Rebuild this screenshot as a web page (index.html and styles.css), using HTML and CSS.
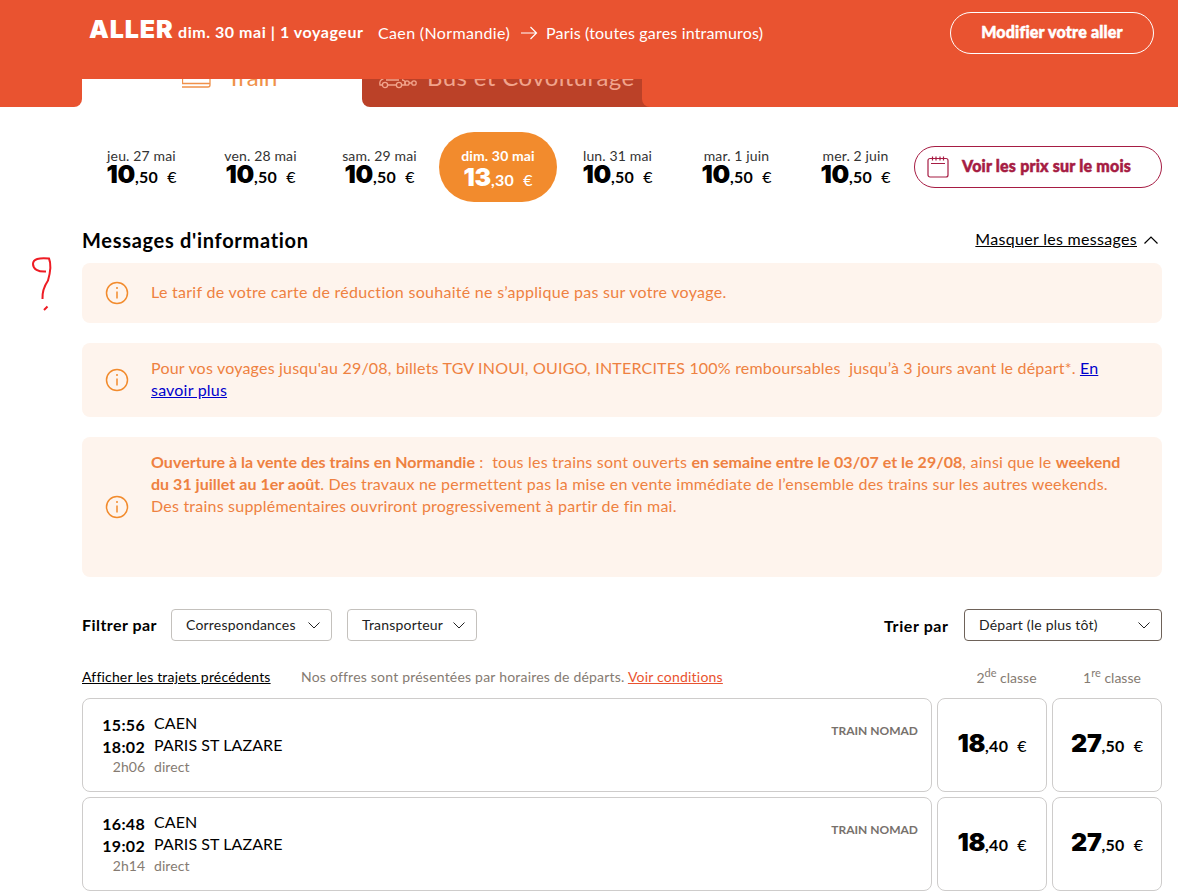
FILE: index.html
```html
<!DOCTYPE html>
<html lang="fr">
<head>
    <meta charset="UTF-8">
    <meta name="viewport" content="width=device-width, initial-scale=1.0">
    <title>Caen - Paris</title>
    <link rel="stylesheet" href="styles.css">
</head>
<body>
    <!-- Header -->
    <header class="header">
        <h1>ALLER</h1>
        <span class="header-date">dim. 30 mai | 1 voyageur</span>
        <span class="header-from">Caen (Normandie)</span>
        <svg class="arrow" width="18" height="14" viewBox="0 0 18 14"><path d="M1 7h15.500M10.500 1l6 6-6 6"/></svg>
        <span class="header-to">Paris (toutes gares intramuros)</span>
        <button class="button button-edit"><span>Modifier votre aller</span></button>
    </header>

    <!-- Tabs -->
    <nav class="tabs">
        <div class="tabs-left"></div>
        <div class="tab tab-train">
            <svg width="30" height="24" viewBox="0 0 30 24"><path d="M0.500 1v18M0 18.500h28M28 1v19q0 2-2 2H0"/></svg>
            <span>Train</span>
        </div>
        <div class="tab tab-bus">
            <svg width="40" height="24" viewBox="0 0 40 24"><path d="M4 20H2q-1-5 3-6l4-5h12l4 5M10 20h8M8 15h13M24 20h3q1-5-3-5M31 18h3"/><circle cx="7" cy="20" r="2.600"/><circle cx="21" cy="20" r="2.600"/><circle cx="29" cy="18" r="2.200"/><circle cx="36" cy="18" r="2.200"/></svg>
            <span>Bus et Covoiturage</span>
        </div>
        <div class="tabs-right"></div>
    </nav>

    <main class="container">
        <!-- Dates -->
        <div class="dates">
            <div class="date"><span class="day">jeu. 27 mai</span><span class="price"><b>10</b><i>,50</i><em>€</em></span></div>
            <div class="date"><span class="day">ven. 28 mai</span><span class="price"><b>10</b><i>,50</i><em>€</em></span></div>
            <div class="date"><span class="day">sam. 29 mai</span><span class="price"><b>10</b><i>,50</i><em>€</em></span></div>
            <div class="date active"><span class="day">dim. 30 mai</span><span class="price"><b>13</b><i>,30</i><em>€</em></span></div>
            <div class="date"><span class="day">lun. 31 mai</span><span class="price"><b>10</b><i>,50</i><em>€</em></span></div>
            <div class="date"><span class="day">mar. 1 juin</span><span class="price"><b>10</b><i>,50</i><em>€</em></span></div>
            <div class="date"><span class="day">mer. 2 juin</span><span class="price"><b>10</b><i>,50</i><em>€</em></span></div>
            <button class="button button-month">
                <svg width="22" height="22" viewBox="0 0 22 22"><rect x="1" y="2.500" width="20" height="18.500" rx="2"/><path d="M4 7.500h14M5.500 0.500v4M9 0.500v4M13 0.500v4M16.500 0.500v4"/></svg>
                <span>Voir les prix sur le mois</span>
            </button>
        </div>

        <!-- Messages -->
        <section class="messages">
            <div class="messages-header">
                <h2>Messages d'information</h2>
                <a class="toggle" href="#">Masquer les messages</a>
                <svg width="14" height="8" viewBox="0 0 14 8"><path d="M0.500 7.500L7 1l6.500 6.500"/></svg>
            </div>
            <div class="message message-short">
                <svg class="info" width="24" height="24" viewBox="0 0 24 24"><circle cx="12" cy="12" r="10.500"/><path d="M12 10.500v7M12 6v2"/></svg>
                <p>Le tarif de votre carte de réduction souhaité ne s’applique pas sur votre voyage.</p>
            </div>
            <div class="message message-medium">
                <svg class="info" width="24" height="24" viewBox="0 0 24 24"><circle cx="12" cy="12" r="10.500"/><path d="M12 10.500v7M12 6v2"/></svg>
                <p>Pour vos voyages jusqu'au 29/08, billets TGV INOUI, OUIGO, INTERCITES 100% remboursables&nbsp; jusqu’à 3 jours avant le départ*. <a href="#">En<br>savoir plus</a></p>
            </div>
            <div class="message message-long">
                <svg class="info" width="24" height="24" viewBox="0 0 24 24"><circle cx="12" cy="12" r="10.500"/><path d="M12 10.500v7M12 6v2"/></svg>
                <p>
                    <strong>Ouverture à la vente des trains en Normandie</strong> :&nbsp; tous les trains sont ouverts <strong>en semaine entre le 03/07 et le 29/08</strong>, ainsi que le <strong>weekend<br>
                    du 31 juillet au 1er août</strong>. Des travaux ne permettent pas la mise en vente immédiate de l’ensemble des trains sur les autres weekends.<br>
                    Des trains supplémentaires ouvriront progressivement à partir de fin mai.
                </p>
            </div>
            <svg class="question" width="24" height="58" viewBox="0 0 24 58"><path d="M15 15.500C7 16 2 13 2 8 2 3 8 1.500 18 2.500c3 7 1 15-1 22-4 6-6 11-5.500 18.500M13 54l3.500-3.500"/></svg>
        </section>

        <!-- Filters -->
        <div class="filters">
            <strong class="filter-label">Filtrer par</strong>
            <button class="select select-conn"><span>Correspondances</span><svg width="12" height="7" viewBox="0 0 12 7"><path d="M0.500 0.500L6 6l5.500-5.500"/></svg></button>
            <button class="select select-carrier"><span>Transporteur</span><svg width="12" height="7" viewBox="0 0 12 7"><path d="M0.500 0.500L6 6l5.500-5.500"/></svg></button>
            <strong class="sort-label">Trier par</strong>
            <button class="select select-sort"><span>Départ (le plus tôt)</span><svg width="12" height="7" viewBox="0 0 12 7"><path d="M0.500 0.500L6 6l5.500-5.500"/></svg></button>
        </div>

        <!-- Results -->
        <div class="results-header">
            <a class="previous" href="#">Afficher les trajets précédents</a>
            <span class="note">Nos offres sont présentées par horaires de départs. <a href="#">Voir conditions</a></span>
            <span class="class-name second">2<sup>de</sup> classe</span>
            <span class="class-name first">1<sup>re</sup> classe</span>
        </div>
        <div class="results">
            <div class="card trip">
                <div class="times"><b>15:56</b><b>18:02</b><small>2h06</small></div>
                <div class="stations"><span>CAEN</span><span>PARIS ST LAZARE</span><small>direct</small></div>
                <span class="carrier">TRAIN NOMAD</span>
            </div>
            <div class="card fare"><span class="price"><b>18</b><i>,40</i><em>€</em></span></div>
            <div class="card fare"><span class="price"><b>27</b><i>,50</i><em>€</em></span></div>

            <div class="card trip">
                <div class="times"><b>16:48</b><b>19:02</b><small>2h14</small></div>
                <div class="stations"><span>CAEN</span><span>PARIS ST LAZARE</span><small>direct</small></div>
                <span class="carrier">TRAIN NOMAD</span>
            </div>
            <div class="card fare"><span class="price"><b>18</b><i>,40</i><em>€</em></span></div>
            <div class="card fare"><span class="price"><b>27</b><i>,50</i><em>€</em></span></div>
        </div>
    </main>
</body>
</html>
```
FILE: styles.css
```css
* {
    box-sizing: border-box;
}

body {
    font-family: Lato, sans-serif;
    font-size: 16px;
    margin: 0;
    height: 896px;
    overflow: hidden;
    background-color: #fff;
    color: #000;
    white-space: nowrap;
}

h1, h2, p {
    margin: 0;
}

svg {
    fill: none;
    stroke: currentColor;
    flex: none;
}

button {
    font-family: inherit;
    background: none;
    padding: 0;
}

.button {
    height: 42px;
    border-radius: 21px;
    font-size: 16px;
    font-weight: 900;
    letter-spacing: 0.2px;
    -webkit-text-stroke: 0.5px currentColor;
}

.button svg {
    stroke-width: 1.2;
}

/* Header */
.header {
    display: flex;
    height: 79px;
    padding: 12px 24px 0 89px;
    background-color: #e95330;
    color: #fff;
    line-height: 39px;
}

.header h1 {
    width: 89px;
    font-family: Inter, Lato, sans-serif;
    font-size: 25px;
    font-weight: 900;
    line-height: 34px;
    letter-spacing: 0.9px;
}

.header-date {
    width: 200px;
    font-weight: 700;
    letter-spacing: 0.55px;
}

.header-from {
    width: 142px;
    line-height: 41px;
    letter-spacing: 0.35px;
}

.arrow {
    margin: 14px 8px 0 0;
    stroke-width: 1.2;
}

.header-to {
    line-height: 41px;
    letter-spacing: 0.18px;
}

.button-edit {
    width: 204px;
    margin-left: auto;
    border: 1px solid #fff;
    color: #fff;
    line-height: 36px;
}

.button-edit span {
    display: block;
    padding-bottom: 2px;
}

/* Tabs */
.tabs {
    display: flex;
    height: 28px;
    overflow: hidden;
    font-size: 24px;
    line-height: 30px;
    letter-spacing: 0.4px;
}

.tabs-left {
    width: 82px;
    background-color: #e95330;
    border-bottom-right-radius: 8px;
}

.tab {
    display: flex;
    align-items: flex-end;
    width: 280px;
}

.tab svg {
    margin-bottom: 18px;
    stroke-width: 1.3;
}

.tab span {
    margin-bottom: 15px;
}

.tab-train {
    padding-left: 100px;
    color: #f0914a;
}

.tab-train span {
    margin-left: 15px;
    letter-spacing: -0.2px;
}

.tab-bus {
    width: 288px;
    margin-right: -8px;
    padding-left: 16px;
    background-color: #bb4128;
    border-bottom-left-radius: 8px;
    color: #f2a48c;
}

.tab-bus span {
    margin-left: 9px;
}

.tabs-right {
    flex: 1;
    background-color: #e95330;
    border-bottom-left-radius: 8px;
}

.container {
    width: 1080px;
    margin-left: 82px;
}

/* Dates */
.dates {
    display: flex;
    height: 120px;
    padding-top: 25px;
}

.date {
    display: flex;
    flex-direction: column;
    align-items: center;
    width: 119px;
    height: 70px;
    padding-top: 15px;
}

.day {
    font-size: 14px;
    line-height: 18px;
    letter-spacing: 0.15px;
    color: #333;
}

.price {
    display: flex;
    align-items: baseline;
    line-height: 19px;
}

.price b {
    font-family: Inter, Lato, sans-serif;
    font-size: 25px;
    font-weight: 900;
    letter-spacing: -0.3px;
}

.price i {
    font-size: 16px;
    font-style: normal;
    font-weight: 700;
    letter-spacing: 0.3px;
}

.price em {
    margin-left: 9px;
    font-size: 16px;
    font-style: normal;
}

.active {
    width: 118px;
    margin-right: 1px;
    border-radius: 35px;
    background-color: #f28b2d;
    color: #fff;
}

.active .day {
    color: #fff;
    font-weight: 700;
}

.active .price {
    margin-top: 3px;
}

.button-month {
    display: flex;
    width: 248px;
    margin: 14px 0 0 -1px;
    padding: 9px 0 0 12px;
    border: 1px solid #a61c43;
    color: #a61c43;
    line-height: 20px;
}

.button-month span {
    margin-left: 13px;
}

/* Messages */
.messages {
    position: relative;
}

.messages-header {
    display: flex;
    align-items: center;
    height: 36px;
    padding-right: 4px;
    padding-bottom: 10px;
}

.messages-header h2 {
    font-size: 20px;
    letter-spacing: 0.7px;
    margin-right: auto;
}

.messages-header svg {
    margin-left: 7px;
    stroke-width: 1.2;
}

.toggle {
    margin-bottom: 4px;
    letter-spacing: 0.3px;
    color: #000;
}

.message {
    display: flex;
    align-items: center;
    margin-bottom: 20px;
    padding-left: 23px;
    border-radius: 8px;
    background-color: #fef4ed;
    color: #ee8141;
    line-height: 22px;
    letter-spacing: 0.22px;
}

.message p {
    padding-bottom: 2px;
}

.message strong {
    letter-spacing: 0.03px;
}

.message-short {
    height: 60px;
    letter-spacing: 0.28px;
}

.message-medium {
    height: 74px;
    letter-spacing: 0.2px;
}

.message-long {
    height: 140px;
    margin-bottom: 0;
}

.message-long p {
    margin-bottom: 44px;
}

.info {
    margin-right: 22px;
    stroke: #f28b2d;
    stroke-width: 1.5;
}

.message a {
    color: #00c;
}

/* hand drawn mark in the margin */
.question {
    position: absolute;
    left: -51px;
    top: 29px;
    stroke: #ee1c24;
    stroke-width: 2;
}

/* Filters */
.filters {
    display: flex;
    align-items: center;
    height: 32px;
    margin-top: 32px;
}

.filter-label {
    width: 89px;
    padding-bottom: 2px;
    letter-spacing: 0.45px;
}

.select {
    display: flex;
    align-items: center;
    justify-content: space-between;
    height: 32px;
    padding: 0 11px 0 14px;
    border: 1px solid #c4c1bd;
    border-radius: 4px;
    font-size: 14px;
    letter-spacing: 0.2px;
    color: #222;
}

.select span {
    padding-bottom: 1px;
}

.select-conn {
    width: 161px;
    margin-right: 15px;
}

.select-carrier {
    width: 130px;
}

.sort-label {
    width: 80px;
    margin-left: auto;
    letter-spacing: 0.6px;
}

.select-sort {
    width: 198px;
    border-color: #6e6259;
}

/* Results */
.results-header {
    display: flex;
    height: 57px;
    padding-top: 26px;
    font-size: 14px;
    line-height: 20px;
    color: #857b72;
}

.previous {
    width: 219px;
    letter-spacing: 0.17px;
    color: #000;
}

.note {
    margin-right: auto;
    letter-spacing: 0.21px;
}

.note a {
    color: #e95330;
}

.class-name {
    width: 110px;
    padding-top: 1px;
    text-align: center;
}

.second {
    padding-left: 19px;
}

.first {
    padding-left: 10px;
}

sup {
    font-size: 11px;
    line-height: 0;
}

.results {
    display: grid;
    grid-template-columns: 850px 110px 110px;
    gap: 5px;
}

.card {
    display: flex;
    height: 94px;
    border: 1px solid #cecccb;
    border-radius: 8px;
}

.trip {
    padding: 13px 13px 0 19px;
    line-height: 22px;
}

.times {
    display: flex;
    flex-direction: column;
    width: 43px;
    padding-top: 2px;
    text-align: right;
}

.times b {
    letter-spacing: 0.3px;
}

.times small {
    line-height: 18px;
}

.trip small {
    font-size: 14px;
    color: #857b72;
}

.stations {
    display: flex;
    flex-direction: column;
    margin: 0 auto 0 9px;
    letter-spacing: 0.07px;
}

.carrier {
    padding-top: 8px;
    font-size: 12px;
    font-weight: 700;
    color: #77716c;
}

.fare {
    align-items: center;
    justify-content: center;
    padding-bottom: 1px;
}
```
